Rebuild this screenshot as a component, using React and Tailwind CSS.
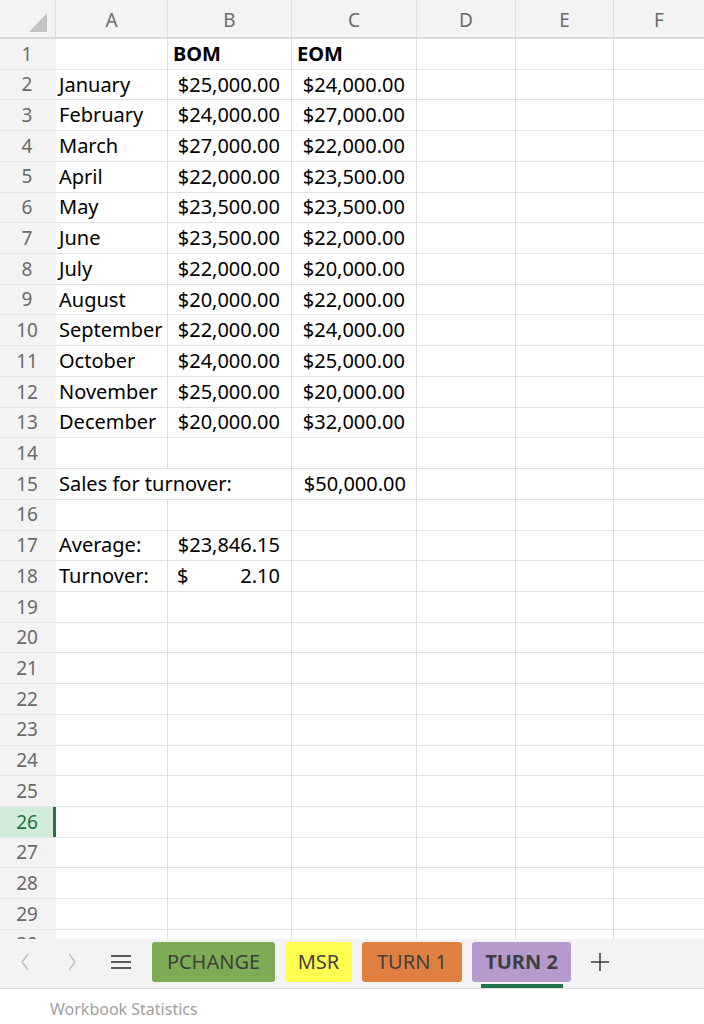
import React from "react";

const cols = [
  { key: "A", w: "w-[112px]" },
  { key: "B", w: "w-[124px]" },
  { key: "C", w: "w-[125px]" },
  { key: "D", w: "w-[99px]" },
  { key: "E", w: "w-[98px]" },
  { key: "F", w: "flex-1" },
];

const months = [
  ["January", "$25,000.00", "$24,000.00"],
  ["February", "$24,000.00", "$27,000.00"],
  ["March", "$27,000.00", "$22,000.00"],
  ["April", "$22,000.00", "$23,500.00"],
  ["May", "$23,500.00", "$23,500.00"],
  ["June", "$23,500.00", "$22,000.00"],
  ["July", "$22,000.00", "$20,000.00"],
  ["August", "$20,000.00", "$22,000.00"],
  ["September", "$22,000.00", "$24,000.00"],
  ["October", "$24,000.00", "$25,000.00"],
  ["November", "$25,000.00", "$20,000.00"],
  ["December", "$20,000.00", "$32,000.00"],
];

function cellsFor(n) {
  if (n === 1) {
    return {
      B: <span className="pl-[5px] font-bold">BOM</span>,
      C: <span className="pl-[5px] font-bold">EOM</span>,
    };
  }
  if (n >= 2 && n <= 13) {
    const [m, b, c] = months[n - 2];
    return {
      A: <span className="pl-[3px] whitespace-nowrap">{m}</span>,
      B: <span className="ml-auto pr-[11px]">{b}</span>,
      C: <span className="ml-auto pr-[11px]">{c}</span>,
    };
  }
  if (n === 15) {
    return {
      A: <span className="pl-[3px] whitespace-nowrap">Sales for turnover:</span>,
      C: <span className="ml-auto pr-[10px]">$50,000.00</span>,
    };
  }
  if (n === 17) {
    return {
      A: <span className="pl-[3px]">Average:</span>,
      B: <span className="ml-auto pr-[11px]">$23,846.15</span>,
    };
  }
  if (n === 18) {
    return {
      A: <span className="pl-[3px]">Turnover:</span>,
      B: (
        <span className="flex w-full justify-between pl-[9px] pr-[11px]">
          <span>$</span>
          <span>2.10</span>
        </span>
      ),
    };
  }
  return {};
}

function Row({ n }) {
  const cells = cellsFor(n);
  const selected = n === 26;
  return (
    <div className="flex h-[30.72px] shrink-0">
      <div
        className={
          selected
            ? "relative flex w-[56px] shrink-0 items-center justify-center border-b border-[#e6e6e6] bg-[#d3ebd9] text-[#217346]"
            : "flex w-[56px] shrink-0 items-center justify-center border-b border-[#e6e6e6] bg-[#f3f3f3] text-[#6a6a6a]"
        }
      >
        <span className="pr-[2px] text-[19px]">{n}</span>
        {selected && <div className="absolute right-0 top-0 h-full w-[3px] bg-[#217346]" />}
      </div>
      {cols.map((c, i) => (
        <div
          key={c.key}
          className={
            "flex shrink-0 items-center overflow-visible border-b border-[#e1e1e1] text-[20px] text-black " +
            c.w +
            (i < cols.length - 1 ? " border-r" : "") +
            (n === 15 && c.key === "A" ? " border-r-0" : "")
          }
        >
          {cells[c.key]}
        </div>
      ))}
    </div>
  );
}

function Chevron({ dir }) {
  return (
    <svg width="10" height="18" viewBox="0 0 10 18" fill="none" stroke="#bdbdbd" strokeWidth="1.3">
      {dir === "left" ? <path d="M8 1 L2 9 L8 17" /> : <path d="M2 1 L8 9 L2 17" />}
    </svg>
  );
}

export default function App() {
  const rows = Array.from({ length: 30 }, (_, i) => i + 1);
  return (
    <div className="flex h-[1024px] w-[704px] flex-col overflow-hidden bg-white font-['Noto_Sans',sans-serif]">
      {/* column headers */}
      <div className="flex h-[39px] shrink-0 border-b-2 border-[#d9d9d9] bg-[#f3f3f3]">
        <div className="flex w-[56px] shrink-0 items-end justify-end border-r border-[#dedede] pb-[5px] pr-[8px]">
          <svg width="18" height="19" viewBox="0 0 18 19">
            <polygon points="18,0 18,19 0,19" fill="#c4c4c4" />
          </svg>
        </div>
        {cols.map((c, i) => (
          <div
            key={c.key}
            className={
              "flex shrink-0 items-end justify-center pb-[3px] text-[19px] text-[#6a6a6a] " +
              c.w +
              (i < cols.length - 1 ? " border-r border-[#dedede]" : "")
            }
          >
            {c.key}
          </div>
        ))}
      </div>

      {/* grid */}
      <div className="flex h-[900px] shrink-0 flex-col overflow-hidden">
        {rows.map((n) => (
          <Row key={n} n={n} />
        ))}
      </div>

      {/* sheet tabs */}
      <div className="flex h-[50px] shrink-0 items-start border-b border-[#dcdcdc] bg-[#f3f3f3] pt-[3px] font-['Liberation_Sans_Narrow','Noto_Sans',sans-serif]">
        <div className="flex h-[40px] w-[48px] items-center justify-center pl-[2px]">
          <Chevron dir="left" />
        </div>
        <div className="flex h-[40px] w-[48px] items-center justify-center">
          <Chevron dir="right" />
        </div>
        <div className="flex h-[40px] w-[50px] items-center justify-center">
          <svg width="20" height="16" viewBox="0 0 20 16" stroke="#333" strokeWidth="1.6">
            <line x1="0" y1="2" x2="20" y2="2" />
            <line x1="0" y1="8" x2="20" y2="8" />
            <line x1="0" y1="14" x2="20" y2="14" />
          </svg>
        </div>
        <div className="ml-[6px] flex gap-[10px]">
          <div className="flex h-[40px] w-[123px] items-center justify-center rounded-[3px] bg-[#7eac55] text-[20px] text-[#3f3f3f]">
            PCHANGE
          </div>
          <div className="flex h-[40px] w-[67px] items-center justify-center rounded-[3px] bg-[#ffff4f] text-[20px] text-[#3f3f3f]">
            MSR
          </div>
          <div className="flex h-[40px] w-[100px] items-center justify-center rounded-[3px] bg-[#e08040] text-[20px] text-[#3f3f3f]">
            TURN 1
          </div>
          <div className="relative flex h-[40px] w-[99px] items-center justify-center rounded-[3px] bg-[#b49acd] text-[20px] font-bold text-[#3f3f3f]">
            TURN 2
            <div className="absolute bottom-[-6px] left-[9px] h-[4px] w-[82px] bg-[#217346]" />
          </div>
        </div>
        <div className="ml-[20px] flex h-[40px] w-[18px] items-center justify-center">
          <svg width="18" height="18" viewBox="0 0 18 18" stroke="#333" strokeWidth="1.4">
            <line x1="9" y1="0" x2="9" y2="18" />
            <line x1="0" y1="9" x2="18" y2="9" />
          </svg>
        </div>
      </div>

      {/* status bar */}
      <div className="flex-1 pl-[50px] pt-[8px] text-[16px] text-[#a0a0a0]">Workbook Statistics</div>
    </div>
  );
}
